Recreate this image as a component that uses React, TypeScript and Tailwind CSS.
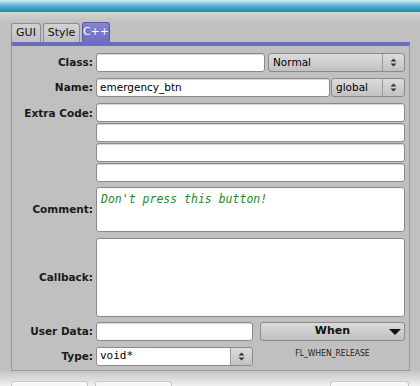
import React from "react";

const sans = { fontFamily: '"DejaVu Sans", Verdana, sans-serif' };

function Label({ text, top = false }: { text: string; top?: boolean }) {
    return (
        <div className={"w-[81px] mr-[3px] shrink-0 text-right font-bold text-[10.5px] text-[#1a1a1a] " + (top ? "self-start pt-[3px]" : "self-center")}>
            {text}
        </div>
    );
}

function Input({ className = "", children }: { className?: string; children?: React.ReactNode }) {
    return (
        <div className={"bg-white border border-[#8a8a8a] rounded-[3px] shadow-[inset_0_1px_0_#d8d8d8] flex items-center px-[3px] text-[10.5px] text-black overflow-hidden " + className}>
            {children}
        </div>
    );
}

function Spinner() {
    return (
        <svg width="7" height="9" viewBox="0 0 7 9">
            <path d="M3.5 0.5 L6.5 3.5 L0.5 3.5 Z" fill="#333" />
            <path d="M0.5 5.5 L6.5 5.5 L3.5 8.5 Z" fill="#333" />
        </svg>
    );
}

function Choice({ text, className = "" }: { text: string; className?: string }) {
    return (
        <div className={"flex items-stretch border border-[#8a8a8a] rounded-[3px] bg-gradient-to-b from-[#dcdcdc] to-[#c2c2c2] text-[10.5px] text-black " + className}>
            <div className="flex-1 flex items-center pl-[4px]">{text}</div>
            <div className="w-[22px] border-l border-[#9a9a9a] flex items-center justify-center">
                <Spinner />
            </div>
        </div>
    );
}

export default function App() {
    return (
        <div className="w-[420px] h-[386px] bg-[#c0c0c0] overflow-hidden flex flex-col" style={sans}>
            <div className="h-[12px] bg-gradient-to-b from-[#d4eff6] via-[#4fb0cf] to-[#1a8bb2]" />
            <div className="h-[10px] bg-gradient-to-b from-[#d6d6d6] to-[#c0c0c0]" />

            {/* tabs */}
            <div className="ml-[11px] flex items-end gap-[2px] h-[20px] text-[11px]">
                <div className="h-[19px] w-[30px] flex items-center justify-center border border-b-0 border-[#8e8e8e] rounded-t-[3px] bg-gradient-to-b from-[#d2d2d2] to-[#c2c2c2] text-[#111]">GUI</div>
                <div className="h-[19px] w-[37px] flex items-center justify-center border border-b-0 border-[#8e8e8e] rounded-t-[3px] bg-gradient-to-b from-[#d2d2d2] to-[#c2c2c2] text-[#111]">Style</div>
                <div className="h-[20px] w-[28px] flex items-center justify-center border border-b-0 border-[#5a5aa6] rounded-t-[3px] bg-gradient-to-b from-[#8484d4] to-[#6e6ec2] text-white">C++</div>
            </div>

            {/* panel */}
            <div className="ml-[11px] w-[399px] h-[329px] border-t-[4px] border-t-[#6c6cbc] border-x border-b border-x-[#999] border-b-[#999] pr-[4px] pt-[7px] flex flex-col">
                <div className="flex h-[19px]">
                    <Label text="Class:" />
                    <Input className="w-[169px]" />
                    <Choice text="Normal" className="ml-[3px] w-[137px]" />
                </div>

                <div className="flex h-[19px] mt-[6px]">
                    <Label text="Name:" />
                    <Input className="w-[234px]">emergency_btn</Input>
                    <Choice text="global" className="ml-[1px] w-[74px]" />
                </div>

                <div className="flex mt-[6px]">
                    <Label text="Extra Code:" top />
                    <div className="flex-1 flex flex-col gap-[1px]">
                        <Input className="h-[19px]" />
                        <Input className="h-[19px]" />
                        <Input className="h-[19px]" />
                        <Input className="h-[19px]" />
                    </div>
                </div>

                <div className="flex h-[45px] mt-[5px]">
                    <Label text="Comment:" />
                    <div className="flex-1 bg-white border border-[#8a8a8a] rounded-[3px] px-[4px] pt-[3px] text-[11.5px] italic text-[#1f8a1f]" style={{ fontFamily: '"DejaVu Sans Mono", monospace' }}>
                        Don't press this button!
                    </div>
                </div>

                <div className="flex h-[79px] mt-[6px]">
                    <Label text="Callback:" />
                    <div className="flex-1 bg-white border border-[#8a8a8a] rounded-[3px]" />
                </div>

                <div className="flex h-[19px] mt-[5px]">
                    <Label text="User Data:" />
                    <Input className="w-[157px]" />
                    <div className="ml-[7px] flex-1 relative flex items-center justify-center border border-[#8a8a8a] rounded-[3px] bg-gradient-to-b from-[#dadada] to-[#c0c0c0] font-bold text-[11px] text-[#111]">
                        When
                        <svg className="absolute right-[3px] top-[6px]" width="12" height="6" viewBox="0 0 12 6">
                            <path d="M0 0 L12 0 L6 6 Z" fill="#111" />
                        </svg>
                    </div>
                </div>

                <div className="flex h-[19px] mt-[6px]">
                    <Label text="Type:" />
                    <div className="w-[157px] flex border border-[#8a8a8a] rounded-[3px] overflow-hidden">
                        <div className="flex-1 bg-white flex items-center px-[3px] text-[11px]" style={{ fontFamily: '"DejaVu Sans Mono", monospace' }}>void*</div>
                        <div className="w-[22px] border-l border-[#9a9a9a] bg-gradient-to-b from-[#dcdcdc] to-[#c2c2c2] flex items-center justify-center">
                            <Spinner />
                        </div>
                    </div>
                    <div className="ml-[7px] flex-1 text-center text-[8.5px] leading-[10px] text-[#222] pt-[1px]" style={{ fontFamily: '"DejaVu Sans Condensed", "DejaVu Sans", sans-serif', fontStretch: "condensed" }}>
                        FL_WHEN_RELEASE
                    </div>
                </div>
            </div>

            {/* bottom strip */}
            <div className="flex-1 bg-gradient-to-b from-[#c4c4c4] to-[#f2f2f2] flex items-end">
                <div className="ml-[11px] w-[77px] h-[5px] border border-b-0 border-[#c8c8c8] rounded-t-[3px] bg-[#f8f8f8]" />
                <div className="ml-[7px] w-[77px] h-[5px] border border-b-0 border-[#c8c8c8] rounded-t-[3px] bg-[#f8f8f8]" />
                <div className="ml-auto mr-[11px] w-[79px] h-[5px] border border-b-0 border-[#c8c8c8] rounded-t-[3px] bg-[#f8f8f8]" />
            </div>
        </div>
    );
}
